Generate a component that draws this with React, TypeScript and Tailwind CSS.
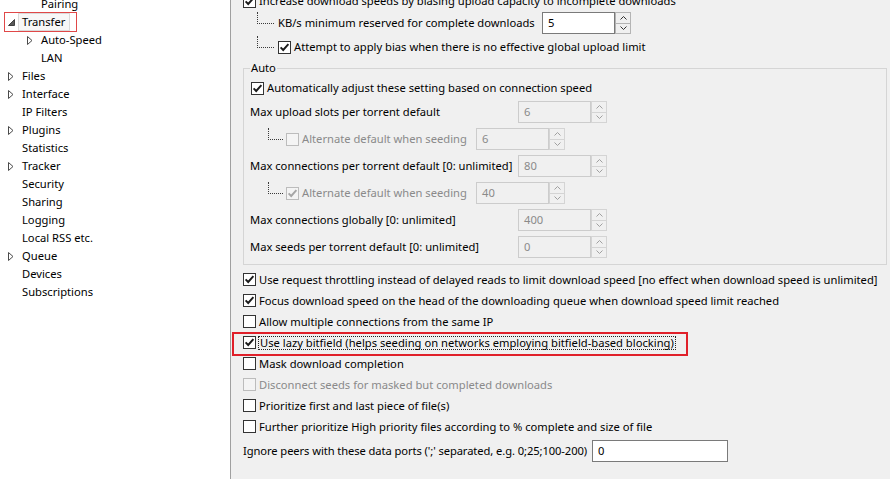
import React from 'react';

type TreeItem = { label: string; level: number; arrow?: 'open' | 'closed'; selected?: boolean };

const tree: TreeItem[] = [
  { label: 'Pairing', level: 1 },
  { label: 'Transfer', level: 0, arrow: 'open', selected: true },
  { label: 'Auto-Speed', level: 1, arrow: 'closed' },
  { label: 'LAN', level: 1 },
  { label: 'Files', level: 0, arrow: 'closed' },
  { label: 'Interface', level: 0, arrow: 'closed' },
  { label: 'IP Filters', level: 0 },
  { label: 'Plugins', level: 0, arrow: 'closed' },
  { label: 'Statistics', level: 0 },
  { label: 'Tracker', level: 0, arrow: 'closed' },
  { label: 'Security', level: 0 },
  { label: 'Sharing', level: 0 },
  { label: 'Logging', level: 0 },
  { label: 'Local RSS etc.', level: 0 },
  { label: 'Queue', level: 0, arrow: 'closed' },
  { label: 'Devices', level: 0 },
  { label: 'Subscriptions', level: 0 },
];

function Arrow({ kind }: { kind?: 'open' | 'closed' }) {
  return (
    <span className="flex h-[18px] w-[13px] shrink-0 items-center pl-[3px]">
      {kind === 'closed' && (
        <svg width="6" height="9" viewBox="0 0 6 9">
          <path d="M0.5 0.5 L5 4.5 L0.5 8.5 Z" fill="white" stroke="#4a4a4a" strokeWidth="1" />
        </svg>
      )}
      {kind === 'open' && (
        <svg width="7" height="7" viewBox="0 0 7 7">
          <path d="M6.5 0.5 L6.5 6.5 L0.5 6.5 Z" fill="#595959" stroke="#404040" strokeWidth="1" />
        </svg>
      )}
    </span>
  );
}

function Check({ checked = false, disabled = false }: { checked?: boolean; disabled?: boolean }) {
  return (
    <span
      className={`flex h-[13px] w-[13px] shrink-0 items-center justify-center border ${
        disabled ? 'border-[#bcbcbc] bg-[#f4f4f4]' : 'border-[#333333] bg-white'
      }`}
    >
      {checked && (
        <svg width="11" height="11" viewBox="0 0 11 11">
          <path
            d="M1.6 5.4 L4.2 8 L9.4 2.2"
            fill="none"
            stroke={disabled ? '#a6a6a6' : '#1a1a1a'}
            strokeWidth="1.9"
          />
        </svg>
      )}
    </span>
  );
}

function Chevron({ up, disabled }: { up?: boolean; disabled?: boolean }) {
  return (
    <span
      className={`flex flex-1 items-center justify-center border ${
        disabled ? 'border-[#d4d4d4]' : 'border-[#b4b4b4]'
      } ${up ? '' : '-mt-px'}`}
    >
      <svg width="7" height="4" viewBox="0 0 7 4">
        <path
          d={up ? 'M0.5 3.5 L3.5 0.5 L6.5 3.5' : 'M0.5 0.5 L3.5 3.5 L6.5 0.5'}
          fill="none"
          stroke={disabled ? '#a0a0a0' : '#333333'}
          strokeWidth="1"
        />
      </svg>
    </span>
  );
}

function Spin({ value, disabled = false }: { value: string; disabled?: boolean }) {
  return (
    <div className="flex h-[22px] w-[89px] shrink-0">
      <div
        className={`flex flex-1 items-center border pl-[5px] ${
          disabled ? 'border-[#cccccc] bg-[#f0f0f0] text-[#8a8a8a]' : 'border-[#7a7a7a] bg-white text-black'
        }`}
      >
        {value}
      </div>
      <div className="flex w-[16px] flex-col bg-[#f0f0f0]">
        <Chevron up disabled={disabled} />
        <Chevron disabled={disabled} />
      </div>
    </div>
  );
}

function Connector({ w }: { w: string }) {
  return <span className={`-mt-[10px] h-[12px] shrink-0 border-b border-l border-dotted border-[#3a3a3a] ${w}`} />;
}

function CheckRow({
  label,
  checked,
  disabled,
}: {
  label: string;
  checked?: boolean;
  disabled?: boolean;
}) {
  return (
    <div className="flex h-[21px] items-center gap-[3px]">
      <Check checked={checked} disabled={disabled} />
      <span className={disabled ? 'text-[#8a8a8a]' : ''}>{label}</span>
    </div>
  );
}

export default function App() {
  return (
    <div className="flex h-[479px] w-[890px] overflow-hidden whitespace-nowrap bg-[#f0f0f0] font-['Noto_Sans',sans-serif] text-[11.2px] leading-[16px] text-black">
      {/* tree */}
      <div className="w-[231px] shrink-0 border-r border-[#a0a0a0] bg-white">
        <div className="-mt-[5px]">
          {tree.map((t) =>
            t.selected ? (
              <div key={t.label} className="flex h-[18px] items-center pl-[4px]">
                <div className="-my-px flex h-[20px] items-center border border-[#e04848] pr-[6px]">
                  <Arrow kind={t.arrow} />
                  <span className="flex h-[18px] items-center border border-[#dadada] bg-[#f7f7f7] pl-[3px] pr-[4px]">
                    {t.label}
                  </span>
                </div>
              </div>
            ) : (
              <div
                key={t.label}
                className={`flex h-[18px] items-center ${t.level === 1 ? 'pl-[24px]' : 'pl-[5px]'}`}
              >
                <Arrow kind={t.arrow} />
                <span className="pl-[4px]">{t.label}</span>
              </div>
            )
          )}
        </div>
      </div>

      {/* settings */}
      <div className="min-w-0 flex-1 pl-[12px] pr-[3px]">
        <div className="-mt-[10px] flex h-[22px] items-center gap-[3px]">
          <Check checked />
          <span>Increase download speeds by biasing upload capacity to incomplete downloads</span>
        </div>
        <div className="flex h-[22px] items-center">
          <span className="ml-[14px] flex items-center">
            <Connector w="w-[17px]" />
          </span>
          <span className="ml-[4px] w-[264px]">KB/s minimum reserved for complete downloads</span>
          <Spin value="5" />
        </div>
        <div className="mt-[2px] flex h-[22px] items-center">
          <span className="ml-[14px] flex items-center">
            <Connector w="w-[17px]" />
          </span>
          <span className="ml-[4px] flex items-center gap-[3px]">
            <Check checked />
            <span>Attempt to apply bias when there is no effective global upload limit</span>
          </span>
        </div>

        <fieldset className="mt-[2px] border border-[#d5d5d5] px-[6px] pb-[6px]">
          <legend className="px-[1px] leading-[16px]">Auto</legend>
          <div className="mt-[1px] ml-[1px] flex h-[22px] items-center gap-[3px]">
            <Check checked />
            <span>Automatically adjust these setting based on connection speed</span>
          </div>
          <div className="mt-[2px] flex h-[22px] items-center">
            <span className="w-[268px]">Max upload slots per torrent default</span>
            <Spin value="6" disabled />
          </div>
          <div className="mt-[5px] flex h-[22px] items-center">
            <span className="ml-[18px] flex items-center">
              <Connector w="w-[15px]" />
            </span>
            <span className="ml-[3px] flex w-[190px] items-center gap-[3px]">
              <Check disabled />
              <span className="text-[#8a8a8a]">Alternate default when seeding</span>
            </span>
            <Spin value="6" disabled />
          </div>
          <div className="mt-[5px] flex h-[22px] items-center">
            <span className="w-[268px]">Max connections per torrent default [0: unlimited]</span>
            <Spin value="80" disabled />
          </div>
          <div className="mt-[5px] flex h-[22px] items-center">
            <span className="ml-[18px] flex items-center">
              <Connector w="w-[15px]" />
            </span>
            <span className="ml-[3px] flex w-[190px] items-center gap-[3px]">
              <Check checked disabled />
              <span className="text-[#8a8a8a]">Alternate default when seeding</span>
            </span>
            <Spin value="40" disabled />
          </div>
          <div className="mt-[5px] flex h-[22px] items-center">
            <span className="w-[268px]">Max connections globally [0: unlimited]</span>
            <Spin value="400" disabled />
          </div>
          <div className="mt-[5px] flex h-[22px] items-center">
            <span className="w-[268px]">Max seeds per torrent default [0: unlimited]</span>
            <Spin value="0" disabled />
          </div>
        </fieldset>

        <div className="mt-[4px]">
          <CheckRow
            checked
            label="Use request throttling instead of delayed reads to limit download speed [no effect when download speed is unlimited]"
          />
          <CheckRow
            checked
            label="Focus download speed on the head of the downloading queue when download speed limit reached"
          />
          <CheckRow label="Allow multiple connections from the same IP" />
          <div className="-mb-[3px] -ml-[11px] flex h-[24px] w-fit items-center gap-[2px] border-2 border-[#e0202a] pb-[3px] pl-[9px] pr-[10px]">
            <Check checked />
            <span className="border border-dotted border-[#222] px-px leading-[12px]">
              Use lazy bitfield (helps seeding on networks employing bitfield-based blocking)
            </span>
          </div>
          <CheckRow label="Mask download completion" />
          <CheckRow disabled label="Disconnect seeds for masked but completed downloads" />
          <CheckRow label="Prioritize first and last piece of file(s)" />
          <CheckRow label="Further prioritize High priority files according to % complete and size of file" />
          <div className="mt-[3px] flex h-[22px] items-center gap-[5px]">
            <span className="shrink-0 tracking-[-0.09px]">
              Ignore peers with these data ports (';' separated, e.g. 0;25;100-200)
            </span>
            <span className="flex h-[22px] w-[136px] shrink-0 items-center border border-[#7a7a7a] bg-white pl-[5px]">0</span>
          </div>
        </div>
      </div>
    </div>
  );
}
